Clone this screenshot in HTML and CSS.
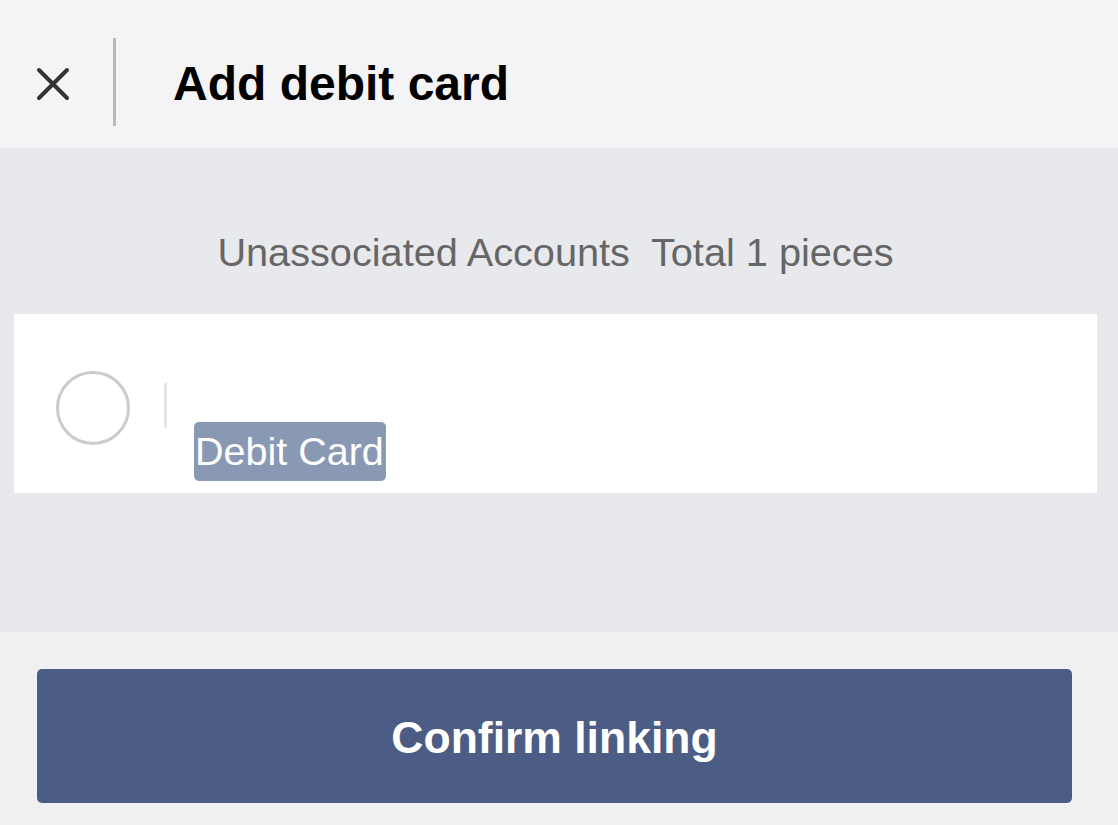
FILE: index.html
```html
<!DOCTYPE html>
<html lang="en">
<head>
    <meta charset="UTF-8">
    <meta name="viewport" content="width=device-width, initial-scale=1.0">
    <title>Add debit card</title>
    <link rel="stylesheet" href="styles.css">
</head>
<body>
    <div class="header">
        <button class="close-button" aria-label="Close">
            <svg width="34" height="34" viewBox="0 0 34 34">
                <path d="M3 3 L31 31 M31 3 L3 31" stroke="#333" stroke-width="4" stroke-linecap="round" fill="none"/>
            </svg>
        </button>
        <div class="header-divider"></div>
        <h1>Add debit card</h1>
    </div>

    <div class="content">
        <p class="summary"><span>Unassociated Accounts</span><span class="total">Total 1 pieces</span></p>
        <div class="account-card">
            <span class="radio"></span>
            <div class="account-info">
                <div class="account-line"></div>
                <span class="tag">Debit Card</span>
            </div>
        </div>
    </div>

    <div class="footer">
        <button class="confirm-button">Confirm linking</button>
    </div>
</body>
</html>
```
FILE: styles.css
```css
html, body {
    height: 100%;
}
body {
    font-family: "Liberation Sans", Arial, sans-serif;
    margin: 0;
    padding: 0;
    display: flex;
    flex-direction: column;
    background-color: #eef0f2;
}
.header {
    height: 148px;
    box-sizing: border-box;
    padding-top: 18px;
    display: flex;
    align-items: center;
    background-color: #f4f4f6;
}
.close-button {
    margin-left: 36px;
    margin-top: 2px;
    padding: 0;
    border: none;
    background: none;
    display: flex;
    cursor: pointer;
}
.header-divider {
    width: 3px;
    height: 88px;
    margin-left: 43px;
    margin-top: -2px;
    background-color: #b9b9b9;
}
h1 {
    margin: 0 0 0 57px;
    font-size: 48px;
    font-weight: bold;
    color: #000;
}
.content {
    height: 484px;
    box-sizing: border-box;
    padding: 74px 21px 0 14px;
    background-color: #e8e9ed;
}
.summary {
    margin: 0;
    line-height: 60px;
    font-size: 39.7px;
    color: #666;
    text-align: center;
}
.total {
    margin-left: 21px;
}
.account-card {
    margin-top: 32px;
    height: 179px;
    display: flex;
    align-items: flex-start;
    background-color: #fff;
}
.radio {
    width: 68px;
    height: 68px;
    margin: 57px 0 0 42px;
    border: 3px solid #cbcbcb;
    border-radius: 50%;
}
.account-info {
    margin: 69px 0 0 34px;
    display: flex;
    flex-direction: column;
    align-items: flex-start;
}
.account-line {
    width: 3px;
    height: 45px;
    background-color: #e6e6e8;
}
.tag {
    margin: -6px 0 0 30px;
    padding: 0 2px 0 1px;
    line-height: 59px;
    font-size: 39.5px;
    color: #fff;
    background-color: #8a99b3;
    border-radius: 5px;
}
.footer {
    flex: 1;
    padding: 37px 46px 0 37px;
    background-color: #eef0f2;
}
.confirm-button {
    width: 100%;
    height: 134px;
    padding-top: 4px;
    border: none;
    border-radius: 5px;
    background-color: #4b5d84;
    color: #fff;
    font-family: "Liberation Sans", Arial, sans-serif;
    font-size: 44.5px;
    font-weight: bold;
    cursor: pointer;
}
```
